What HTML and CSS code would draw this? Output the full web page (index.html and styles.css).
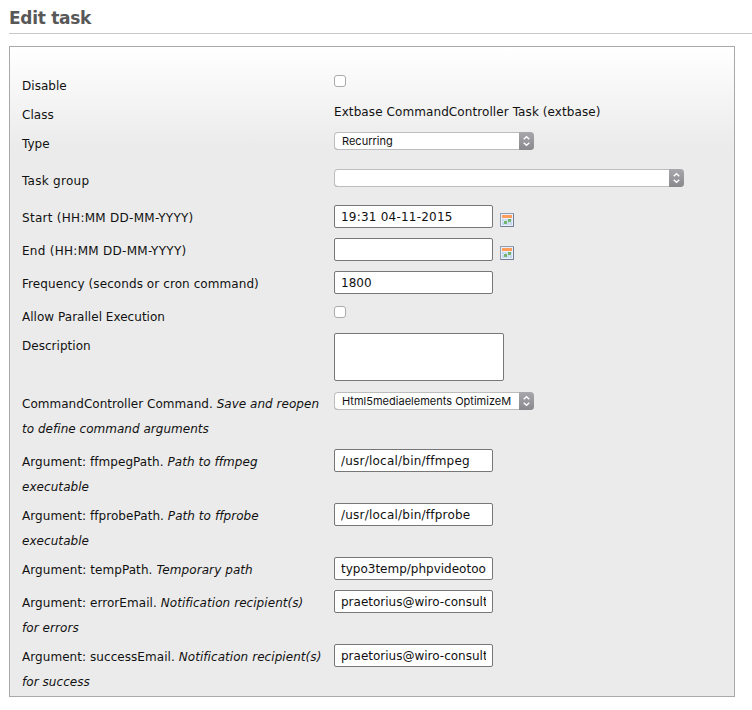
FILE: index.html
```html
<!DOCTYPE html>
<html lang="en">
<head>
<meta charset="utf-8">
<title>Edit task</title>
<link rel="stylesheet" href="styles.css">
</head>
<body>
<svg class="symbols" aria-hidden="true">
  <symbol id="calendar" viewBox="0 0 14 15">
    <rect x=".5" y=".5" width="13" height="13" fill="#e9f0fa" stroke="#939db0"/>
    <path d="M13.500 1v12.500H1" fill="none" stroke="#737e94"/>
    <rect x="2" y="2" width="10" height="3" fill="#ff9d5c"/>
    <path d="M2 6h10v6H2z" fill="#c4d7ef"/>
    <path d="M2 8.500h10M4.500 6v6M7 6v6M9.500 6v6" stroke="#e8f0fb" stroke-width=".7"/>
    <path d="M8 6h3v3H8zM4 8h3v3H4z" fill="#72b56e"/>
  </symbol>
  <symbol id="arrows" viewBox="0 0 15 18">
    <path d="M4.700 7.300 7.500 4.700l2.800 2.600M4.700 10.700l2.800 2.600 2.800-2.600" fill="none" stroke="#fff" stroke-width="1.400"/>
  </symbol>
</svg>
<h1>Edit task</h1>
<form class="panel">
  <div class="row"><label>Disable</label><input type="checkbox"></div>
  <div class="row"><label>Class</label><span class="static">Extbase CommandController Task (extbase)</span></div>
  <div class="row tall"><label>Type</label><div class="select"><span>Recurring</span><svg><use href="#arrows"/></svg></div></div>
  <div class="row tall"><label class="loose">Task group</label><div class="select wide"><span></span><svg><use href="#arrows"/></svg></div></div>
  <div class="row field"><label class="loose">Start (HH:MM DD-MM-YYYY)</label><input class="loose" type="text" value="19:31 04-11-2015"><svg class="calendar"><use href="#calendar"/></svg></div>
  <div class="row field"><label class="loose">End (HH:MM DD-MM-YYYY)</label><input type="text"><svg class="calendar"><use href="#calendar"/></svg></div>
  <div class="row field"><label>Frequency (seconds or cron command)</label><input type="text" value="1800"></div>
  <div class="row"><label>Allow Parallel Execution</label><input type="checkbox"></div>
  <div class="row double"><label>Description</label><textarea></textarea></div>
  <div class="row double"><label>CommandController Command. <em>Save and reopen<br>to define command arguments</em></label><div class="select"><span>Html5mediaelements OptimizeM</span><svg><use href="#arrows"/></svg></div></div>
  <div class="row argument"><label>Argument: ffmpegPath. <em>Path to ffmpeg<br>executable</em></label><input class="loose" type="text" value="/usr/local/bin/ffmpeg"></div>
  <div class="row argument"><label>Argument: ffprobePath. <em>Path to ffprobe<br>executable</em></label><input class="loose" type="text" value="/usr/local/bin/ffprobe"></div>
  <div class="row field"><label>Argument: tempPath. <em>Temporary path</em></label><input type="text" value="typo3temp/phpvideotoo"></div>
  <div class="row argument"><label>Argument: errorEmail. <em>Notification recipient(s)<br>for errors</em></label><input type="text" value="praetorius@wiro-consultin"></div>
  <div class="row argument"><label>Argument: successEmail. <em>Notification recipient(s)<br>for success</em></label><input type="text" value="praetorius@wiro-consultin"></div>
</form>
</body>
</html>
```
FILE: styles.css
```css
* { box-sizing: border-box; }
body {
  margin: 0;
  padding-left: 9px;
  background: #fff;
  color: #111;
  font: 12px/25px "DejaVu Sans", Verdana, sans-serif;
}
.symbols { position: absolute; width: 0; height: 0; }
h1 {
  height: 34px;
  margin: 0 0 12px;
  padding-top: 5px;
  border-bottom: 1px solid #c8c8c8;
  color: #585858;
  font-size: 17px;
  line-height: 26px;
  letter-spacing: -.3px;
}
.panel {
  width: 726px;
  height: 651px;
  padding: 26px 12px 0;
  border: 1px solid #a9a9a9;
  background: linear-gradient(#fff, #ebebeb 100px);
}
.row { display: flex; align-items: flex-start; height: 29px; }
.tall { height: 37px; }
.field { height: 33px; }
.double { height: 58px; }
.argument { height: 54px; }
label { flex: 0 0 312px; padding-top: 1px; white-space: nowrap; letter-spacing: .03px; }
.argument label { letter-spacing: .06px; }
.field label { letter-spacing: .08px; }
.field label.loose, label.loose { letter-spacing: .28px; }
.static { margin-top: -2px; letter-spacing: .09px; }
input[type="checkbox"] {
  appearance: none;
  width: 12px;
  height: 12px;
  margin: 2px 0 0;
  border: 1px solid #aaa;
  border-radius: 3px;
  background: #fff;
}
input[type="text"] {
  width: 159px;
  height: 23px;
  margin: 0;
  padding: 0 6px;
  border: 1px solid #777;
  border-radius: 2px;
  background: #fff;
  color: #111;
  font: 12px "DejaVu Sans", Verdana, sans-serif;
}
input.loose { letter-spacing: .22px; }
textarea {
  width: 170px;
  height: 48px;
  margin: 0;
  border: 1px solid #777;
  border-radius: 2px;
  background: #fff;
  resize: none;
}
.calendar { width: 14px; height: 15px; margin: 8px 0 0 7px; }
.select {
  display: flex;
  width: 200px;
  height: 18px;
  margin-top: 1px;
  border-radius: 4px;
  overflow: hidden;
  background: #fff;
  box-shadow: inset 0 0 0 1px #bdbdbd, inset 0 -1px #a9a9a9;
  font: 11px/18px Inter, sans-serif;
}
.select.wide { width: 350px; }
.select span { flex: 1; padding-left: 8px; white-space: nowrap; letter-spacing: .01px; }
.select svg { width: 15px; height: 18px; background: linear-gradient(#a8a8ac, #88888d); }
```
